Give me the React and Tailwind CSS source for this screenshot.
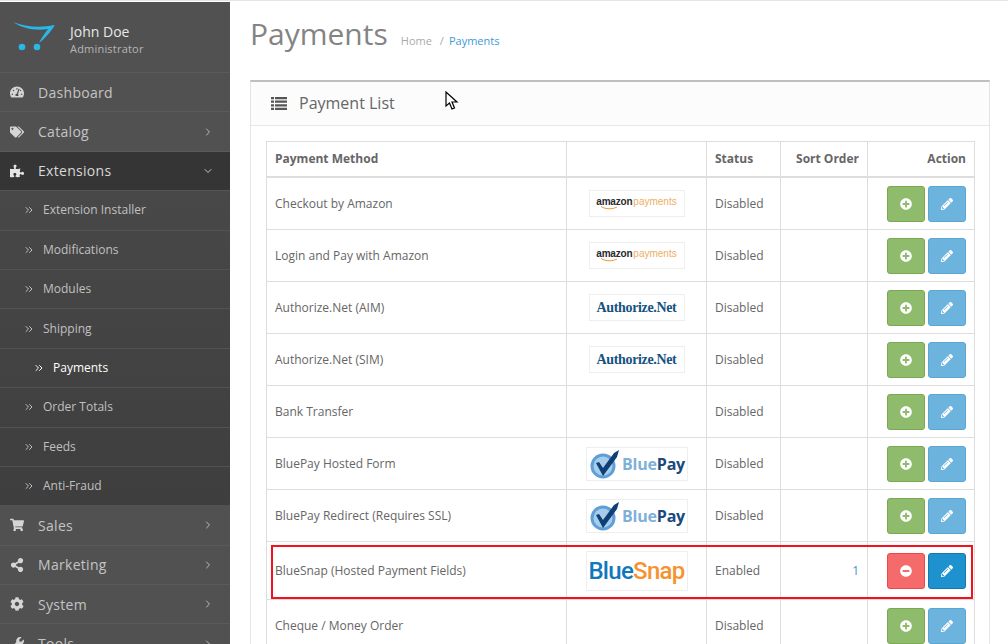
import {
  FaTachometerAlt, FaTags, FaPuzzlePiece, FaShoppingCart, FaShareAlt, FaCog, FaWrench,
  FaPlusCircle, FaMinusCircle, FaPencilAlt,
} from 'react-icons/fa';
import { ChevronRight, ChevronDown, ChevronsRight } from 'lucide-react';

const mainTop = [
  { label: 'Dashboard', icon: FaTachometerAlt },
  { label: 'Catalog', icon: FaTags, arrow: true },
];
const subItems = ['Extension Installer', 'Modifications', 'Modules', 'Shipping', 'Payments', 'Order Totals', 'Feeds', 'Anti-Fraud'];
const mainBottom = [
  { label: 'Sales', icon: FaShoppingCart, arrow: true },
  { label: 'Marketing', icon: FaShareAlt, arrow: true },
  { label: 'System', icon: FaCog, arrow: true },
  { label: 'Tools', icon: FaWrench, arrow: true },
];

const rows = [
  { name: 'Checkout by Amazon', logo: 'amazon', first: true },
  { name: 'Login and Pay with Amazon', logo: 'amazon' },
  { name: 'Authorize.Net (AIM)', logo: 'authorize' },
  { name: 'Authorize.Net (SIM)', logo: 'authorize' },
  { name: 'Bank Transfer' },
  { name: 'BluePay Hosted Form', logo: 'bluepay' },
  { name: 'BluePay Redirect (Requires SSL)', logo: 'bluepay' },
  { name: 'BlueSnap (Hosted Payment Fields)', logo: 'bluesnap', enabled: true },
  { name: 'Cheque / Money Order' },
];

function MainItem({ item }) {
  const Icon = item.icon;
  return (
    <div className="flex h-[39.4px] items-center border-b border-[#5a5a5a] bg-[#515151] text-[#c4c4c4]">
      <span className="flex w-[38px] justify-center pr-[4px] text-[14px] text-[#d5d5d5]"><Icon /></span>
      <span className="flex-1 text-[14px] tracking-[0.3px]">{item.label}</span>
      {item.arrow && <ChevronRight size={12} strokeWidth={2} className="mr-[16px] text-[#bdbdbd]" />}
    </div>
  );
}

function SubItem({ label }) {
  const active = label === 'Payments';
  return (
    <div className={`flex h-[39.4px] items-center border-b border-[#525252] text-[12px] ${active ? 'pl-[33px] text-white' : 'pl-[23px] text-[#c0c0c0]'}`}>
      <ChevronsRight size={12} strokeWidth={2} className="mr-[8px]" />
      <span>{label}</span>
    </div>
  );
}

function Logo({ type }) {
  if (type === 'amazon') {
    return (
      <div className="relative mx-auto flex h-[27px] w-[96px] items-center justify-center border border-[#eeeeee] pb-[3px] font-['Liberation_Sans',sans-serif] text-[10px] leading-none">
        <span className="font-bold tracking-[-0.2px] text-[#2a2a2a]">amazon</span>
        <span className="ml-[1px] text-[#eeae63]">payments</span>
        <svg width="18" height="4" viewBox="0 0 18 4" className="absolute left-[10px] top-[15px]">
          <path d="M1 0.5 C6 3.5 12 3.5 17 1" fill="none" stroke="#e99a3c" strokeWidth="1" />
        </svg>
      </div>
    );
  }
  if (type === 'authorize') {
    return (
      <div className="mx-auto flex h-[27px] w-[96px] items-center justify-center border border-[#eeeeee] font-['Liberation_Serif',serif] text-[14px] font-bold tracking-[-0.35px] text-[#15527f]">
        Authorize.Net
      </div>
    );
  }
  if (type === 'bluepay') {
    return (
      <div className="mx-auto flex h-[34px] w-[102px] items-center justify-center gap-[2px] border border-[#eeeeee]">
        <svg width="32" height="32" viewBox="0 0 32 32">
          <circle cx="15" cy="18" r="12.5" fill="#5f9fd6" />
          <circle cx="15" cy="18" r="9.5" fill="#a6cdec" />
          <path d="M8 15 L11 14 L15 20 L26 5 L31 2 L29 9 L15 28 Z" fill="#0f3f74" />
        </svg>
        <span className="text-[16px] font-bold leading-none tracking-[-0.2px]">
          <span className="text-[#7fb0d8]">Blue</span><span className="text-[#1a4a7c]">Pay</span>
        </span>
      </div>
    );
  }
  return (
    <div className="mx-auto flex h-[40px] w-[102px] items-center justify-center border border-[#eeeeee] font-['Roboto',sans-serif] text-[24px] font-medium leading-none tracking-[-0.7px]">
      <span className="text-[#1278be]">Blue</span><span className="text-[#f59331]">Snap</span>
    </div>
  );
}

function ActionButton({ color, children }) {
  return (
    <button className={`flex h-[36px] w-[38px] items-center justify-center rounded-[3px] border text-[12px] text-white ${color}`}>
      {children}
    </button>
  );
}

function Row({ row }) {
  const cell = `border border-[#dddddd] px-[8px] align-middle ${row.first ? 'pt-[1px]' : ''}`;
  const height = row.enabled ? 'h-[58px]' : row.first ? 'h-[53px]' : 'h-[52px]';
  return (
    <tr className={height}>
      <td className={cell}>{row.name}</td>
      <td className={cell}>{row.logo && <Logo type={row.logo} />}</td>
      <td className={cell}>{row.enabled ? 'Enabled' : 'Disabled'}</td>
      <td className={`${cell} text-right text-[#4d93bd]`}>{row.enabled ? '1' : ''}</td>
      <td className={cell}>
        <div className="flex justify-end gap-[3px]">
          {row.enabled ? (
            <ActionButton color="border-[#f24545] bg-[#f56b6b]"><FaMinusCircle /></ActionButton>
          ) : (
            <ActionButton color="border-[#7aa94f] bg-[#8fbb6c]"><FaPlusCircle /></ActionButton>
          )}
          <ActionButton color={row.enabled ? 'border-[#1978ab] bg-[#1e91cf]' : 'border-[#5ba6d2] bg-[#6cb4de]'}><FaPencilAlt /></ActionButton>
        </div>
      </td>
    </tr>
  );
}

export default function App() {
  return (
    <div className="relative h-[644px] w-[1008px] overflow-hidden bg-white font-['Open_Sans',sans-serif] text-[12px] text-[#666666]">
      <div className="h-[2px] border-t border-[#e5e5e5]" />
      <div className="flex h-[642px]">
        <aside className="w-[230px] shrink-0 overflow-hidden bg-[#515151]">
          <div className="flex h-[71px] items-center border-b border-[#5a5a5a] pl-[13px]">
            <svg width="42" height="32" viewBox="0 0 42 32" className="mr-[15px] mt-[2px]">
              <path d="M0 0 C12 5 28 6 41 3 C42 3 41 5 40 6 C35 13 30 18 26 21 C29 15 32 11 35 7 C24 9 10 7 0 0 Z" fill="#2ab6e6" />
              <circle cx="9" cy="25" r="3.3" fill="#2ab6e6" />
              <circle cx="24" cy="25" r="3.3" fill="#2ab6e6" />
            </svg>
            <div className="mt-[4px]">
              <div className="text-[14px] leading-[19px] text-[#e8e8e8]">John Doe</div>
              <div className="text-[11px] leading-[15px] tracking-[0.2px] text-[#b5b5b5]">Administrator</div>
            </div>
          </div>
          {mainTop.map((item) => <MainItem key={item.label} item={item} />)}
          <div className="flex h-[39.4px] items-center border-b border-[#555555] bg-[#353535] text-[#d8d8d8]">
            <span className="flex w-[38px] justify-center pr-[4px] text-[14px] text-[#e5e5e5]"><FaPuzzlePiece /></span>
            <span className="flex-1 text-[14px] tracking-[0.3px]">Extensions</span>
            <ChevronDown size={12} strokeWidth={2} className="mr-[16px] text-[#c5c5c5]" />
          </div>
          <div className="bg-gradient-to-b from-[#484848] to-[#3e3e3e]">
            {subItems.map((label) => <SubItem key={label} label={label} />)}
          </div>
          {mainBottom.map((item) => <MainItem key={item.label} item={item} />)}
        </aside>

        <main className="flex-1 pl-[20px] pr-[18px]">
          <div className="flex h-[78px] items-start pt-[14px]">
            <h1 className="text-[30px] leading-[36px] text-[#848484]">Payments</h1>
            <div className="ml-[13px] mt-[17px] flex text-[11px] leading-[16px] text-[#aaaaaa]">
              <span>Home</span>
              <span className="ml-[8px] mr-[5px]">/</span>
              <span className="text-[#3d9ad6]">Payments</span>
            </div>
          </div>
          <section className="h-[600px] border border-t-2 border-[#e5e5e5] border-t-[#bfbfbf]">
            <div className="flex h-[44px] items-center border-b border-[#e8e8e8] bg-[#fcfcfc] pb-[1px] pl-[20px] text-[#666666]">
              <svg width="16" height="13" viewBox="0 0 16 13" className="mr-[12px]">
                <path d="M0 0h3v2.2H0zM4 0h12v2.2H4zM0 3.6h3v2.2H0zM4 3.6h12v2.2H4zM0 7.2h3v2.2H0zM4 7.2h12v2.2H4zM0 10.8h3V13H0zM4 10.8h12V13H4z" fill="#555555" />
              </svg>
              <span className="text-[16px]">Payment List</span>
            </div>
            <div className="pl-[15px] pt-[15px]">
              <table className="w-[708px] table-fixed border-collapse">
                <colgroup>
                  <col className="w-[300px]" />
                  <col className="w-[140px]" />
                  <col className="w-[74px]" />
                  <col className="w-[87px]" />
                  <col className="w-[107px]" />
                </colgroup>
                <thead>
                  <tr className="h-[35px] font-bold">
                    <th className="border border-b-2 border-[#dddddd] px-[8px] text-left font-bold">Payment Method</th>
                    <th className="border border-b-2 border-[#dddddd] px-[8px]"></th>
                    <th className="border border-b-2 border-[#dddddd] px-[8px] text-left font-bold">Status</th>
                    <th className="border border-b-2 border-[#dddddd] px-[8px] text-right font-bold">Sort Order</th>
                    <th className="border border-b-2 border-[#dddddd] px-[8px] text-right font-bold">Action</th>
                  </tr>
                </thead>
                <tbody>
                  {rows.map((row) => <Row key={row.name} row={row} />)}
                </tbody>
              </table>
            </div>
          </section>
        </main>
      </div>

      {/* annotation drawn on the screenshot */}
      <div className="absolute left-[271px] top-[545px] h-[54px] w-[702px] border-2 border-[#f3111b]" />
      {/* mouse cursor */}
      <svg width="14" height="20" viewBox="0 0 14 20" className="absolute left-[445px] top-[91px]">
        <path d="M1 1 L1 15 L4.5 12 L7 18 L9.5 17 L7 11 L12 11 Z" fill="#ffffff" stroke="#000000" strokeWidth="1.2" />
      </svg>
    </div>
  );
}
